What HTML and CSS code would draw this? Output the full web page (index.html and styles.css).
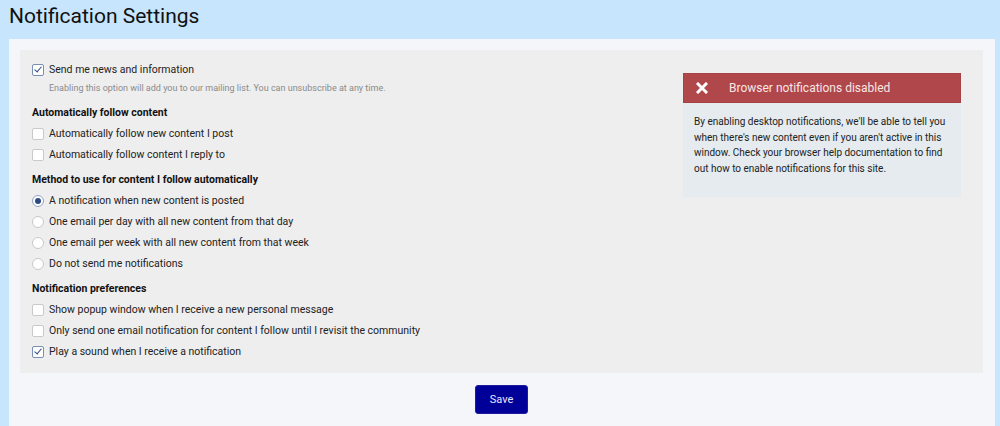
FILE: index.html
```html
<!DOCTYPE html>
<html lang="en">

<head>
    <meta charset="UTF-8">
    <title>Notification Settings</title>
    <link rel="stylesheet" href="styles.css">
</head>

<body>

    <h1 class="page-title">Notification Settings</h1>

    <div class="panel">
        <div class="settings">

            <!-- Left column: options -->
            <div class="options">
                <label class="row">
                    <span class="box checked"></span>
                    Send me news and information
                </label>
                <div class="desc">Enabling this option will add you to our mailing list. You can unsubscribe at any time.</div>

                <h3>Automatically follow content</h3>
                <label class="row"><span class="box"></span>Automatically follow new content I post</label>
                <label class="row"><span class="box"></span>Automatically follow content I reply to</label>

                <h3>Method to use for content I follow automatically</h3>
                <label class="row"><span class="radio checked"></span>A notification when new content is posted</label>
                <label class="row"><span class="radio"></span>One email per day with all new content from that day</label>
                <label class="row"><span class="radio"></span>One email per week with all new content from that week</label>
                <label class="row"><span class="radio"></span>Do not send me notifications</label>

                <h3>Notification preferences</h3>
                <label class="row"><span class="box"></span>Show popup window when I receive a new personal message</label>
                <label class="row"><span class="box"></span>Only send one email notification for content I follow until I revisit the community</label>
                <label class="row"><span class="box checked"></span>Play a sound when I receive a notification</label>
            </div>

            <!-- Right column: browser notification status -->
            <div class="alert">
                <div class="alert-head">
                    <svg class="alert-icon" width="12" height="12" viewBox="0 0 12 12">
                        <path d="M2 2 L10 10 M10 2 L2 10" stroke="#fff" stroke-width="3" stroke-linecap="square" />
                    </svg>
                    <span>Browser notifications disabled</span>
                </div>
                <div class="alert-body">
                    By enabling desktop notifications, we'll be able to tell you<br>
                    when there's new content even if you aren't active in this<br>
                    window. Check your browser help documentation to find<br>
                    out how to enable notifications for this site.
                </div>
            </div>
        </div>

        <div class="actions">
            <button class="save">Save</button>
        </div>
    </div>

</body>

</html>
```

FILE: styles.css
```css
body {
    margin: 0;
    background-color: #c7e5fd;
    font-family: Roboto, 'Liberation Sans', sans-serif;
    color: #222;
}

.page-title {
    margin: 0;
    height: 39px;
    padding-left: 9px;
    font-size: 21px;
    font-weight: 400;
    line-height: 32px;
    color: #111;
}

.panel {
    margin: 0 5px 0 9px;
    padding: 11px 12px 30px 11px;
    background-color: #f4f6fa;
}

.settings {
    display: flex;
    justify-content: space-between;
    align-items: flex-start;
    background-color: #eeeeee;
    padding: 9px 22px 11px 12px;
}

.options {
    font-size: 10.5px;
}

.row {
    display: flex;
    align-items: center;
    height: 21px;
    gap: 5px;
}

.box,
.radio {
    display: inline-block;
    box-sizing: border-box;
    width: 12px;
    height: 12px;
    border: 1px solid #c9c9c9;
    background-color: #fff;
    flex-shrink: 0;
    position: relative;
}

.box {
    border-radius: 2px;
}

.radio {
    border-radius: 50%;
}

.box.checked {
    border-color: #7a8fb4;
}

.box.checked::after {
    content: "";
    position: absolute;
    left: 3px;
    top: 0px;
    width: 3px;
    height: 6px;
    border: solid #2b4a86;
    border-width: 0 1.5px 1.5px 0;
    transform: rotate(40deg);
}

.radio.checked {
    border-color: #8fa3c4;
}

.radio.checked::after {
    content: "";
    position: absolute;
    left: 2px;
    top: 2px;
    width: 6px;
    height: 6px;
    border-radius: 50%;
    background-color: #2b4a86;
}

.desc {
    padding-left: 17px;
    font-size: 9px;
    line-height: 16px;
    color: #8a8a8a;
}

.options h3 {
    margin: 5px 0 0;
    font-size: 10.5px;
    font-weight: 700;
    line-height: 20px;
    color: #111;
}

.desc + h3 {
    margin-top: 7px;
}

.alert {
    width: 278px;
    margin-top: 14px;
    background-color: #e5ebef;
}

.alert-head {
    display: flex;
    align-items: center;
    height: 30px;
    box-sizing: border-box;
    padding-left: 12px;
    gap: 21px;
    background-color: #b0474a;
    border: 1px solid #a84144;
    color: #f8e6e6;
    font-size: 12px;
}

.alert-body {
    padding: 11px 11px 21px;
    font-size: 10px;
    line-height: 15.5px;
    color: #222;
}

.actions {
    display: flex;
    justify-content: center;
    padding-top: 12px;
}

.save {
    width: 53px;
    height: 29px;
    background-color: #000099;
    border: 1px solid #1d1d9c;
    border-radius: 3px;
    color: #e8e8ff;
    font-family: Roboto, 'Liberation Sans', sans-serif;
    font-size: 11px;
    cursor: pointer;
}
```
